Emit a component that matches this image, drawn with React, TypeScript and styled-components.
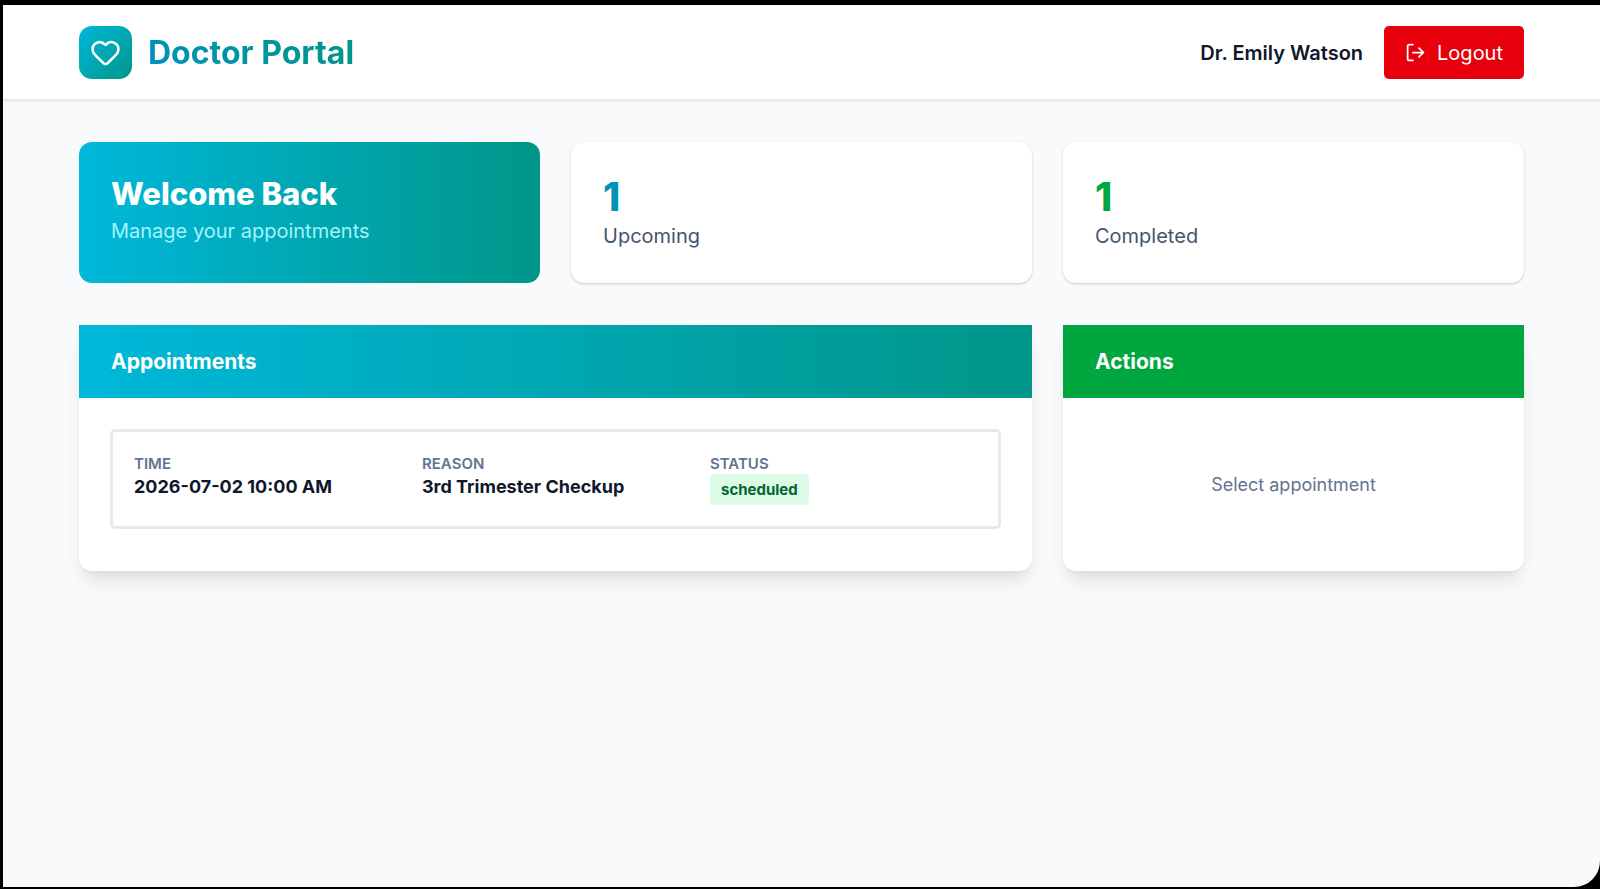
import React from "react";
import styled, { createGlobalStyle } from "styled-components";
import { Heart, LogOut } from "lucide-react";

const GlobalStyle = createGlobalStyle`
  *, *::before, *::after { box-sizing: border-box; }
  body {
    margin: 0;
    background: #000;
    color: #0f172b;
    font-family: Inter, "Liberation Sans", sans-serif;
    font-size: 20px;
    line-height: 32px;
  }
  h1, h2, p, ul, dl, dd { margin: 0; padding: 0; }
`;

const Frame = styled.div`
  display: flex;
  min-height: 100vh;
  padding: 5px 0 2px 3px;
`;

const Page = styled.div`
  flex: 1;
  overflow: hidden;
  border-bottom-right-radius: 26px;
  background: #f8fafc;
`;

const Header = styled.header`
  display: flex;
  align-items: center;
  justify-content: space-between;
  padding: 21px 76px 20px;
  background: #fff;
  border-bottom: 1px solid #e5e7eb;
  box-shadow: 0 1px 3px rgba(0, 0, 0, 0.1);
`;

const Brand = styled.div`
  display: flex;
  align-items: center;
  gap: 16px;
`;

const Logo = styled.span`
  display: grid;
  place-items: center;
  width: 53px;
  height: 53px;
  border-radius: 13px;
  color: #fff;
  background: linear-gradient(135deg in oklab, #00b8db, #009689);
`;

const BrandName = styled.h1`
  font-size: 32px;
  font-weight: 700;
  line-height: 42px;
  color: transparent;
  background: linear-gradient(90deg in oklab, #0092b8, #009689);
  background-clip: text;
`;

const Account = styled.div`
  display: flex;
  align-items: center;
  gap: 21px;
`;

const UserName = styled.span`
  font-weight: 600;
`;

const LogoutButton = styled.button`
  display: flex;
  align-items: center;
  gap: 11px;
  height: 53px;
  padding: 0 21px;
  border: 0;
  border-radius: 5px;
  background: #e7000b;
  color: #fff;
  font: inherit;
  cursor: pointer;
`;

const Main = styled.main`
  display: grid;
  gap: 42px;
  padding: 42px 76px;
`;

const Columns = styled.div`
  display: grid;
  grid-template-columns: repeat(3, minmax(0, 1fr));
  gap: 31px;
`;

const Card = styled.section`
  padding: 31px 32px;
  border-radius: 13px;
  background: #fff;
  box-shadow: 0 1px 3px rgba(0, 0, 0, 0.1), 0 1px 2px rgba(0, 0, 0, 0.1);
`;

const WelcomeCard = styled(Card)`
  background: linear-gradient(90deg in oklab, #00b8db, #009689);
  box-shadow: none;
`;

const WelcomeTitle = styled.h2`
  color: #fff;
  font-size: 31px;
  font-weight: 800;
  line-height: 42px;
`;

const WelcomeText = styled.p`
  color: #a2f4fd;
`;

const StatValue = styled.p<{ $color: string }>`
  color: ${(p) => p.$color};
  font-size: 39px;
  font-weight: 800;
  line-height: 47px;
`;

const StatLabel = styled.p`
  color: #45556c;
`;

const Panel = styled.section<{ $span?: number }>`
  display: flex;
  flex-direction: column;
  grid-column: span ${(p) => p.$span ?? 1};
  border-radius: 13px;
  background: #fff;
  box-shadow: 0 13px 20px -4px rgba(0, 0, 0, 0.1), 0 5px 8px -5px rgba(0, 0, 0, 0.1);
`;

const PanelTitle = styled.h2<{ $background: string }>`
  padding: 21px 32px;
  background: ${(p) => p.$background};
  color: #fff;
  font-size: 21px;
  font-weight: 700;
  line-height: 31px;
`;

const AppointmentList = styled.ul`
  padding: 31px;
  list-style: none;
`;

const Appointment = styled.li`
  margin-bottom: 11px;
  padding: 21px;
  border: 3px solid #e4eaf2;
  border-radius: 5px;
  cursor: pointer;
`;

const Details = styled.dl`
  display: grid;
  grid-template-columns: repeat(3, minmax(0, 1fr));
  gap: 21px;
`;

const DetailLabel = styled.dt`
  color: #62748e;
  font-size: 15px;
  font-weight: 600;
  line-height: 21px;
`;

const DetailValue = styled.dd`
  display: flex;
  font-size: 18px;
  font-weight: 700;
  line-height: 26px;
`;

const Badge = styled.span`
  padding: 5px 11px;
  border-radius: 4px;
  background: #dcfce7;
  color: #016630;
  font-size: 15px;
  font-weight: 700;
  line-height: 21px;
`;

const EmptyState = styled.p`
  display: grid;
  flex: 1;
  place-items: center;
  padding: 31px;
  color: #62748e;
  font-size: 18px;
`;

const appointments = [
  { time: "2026-07-02 10:00 AM", reason: "3rd Trimester Checkup", status: "scheduled" },
];

export default function App() {
  return (
    <>
      <GlobalStyle />
      <Frame>
        <Page>
          <Header>
            <Brand>
              <Logo>
                <Heart size={31} aria-hidden="true" />
              </Logo>
              <BrandName>Doctor Portal</BrandName>
            </Brand>
            <Account>
              <UserName>Dr. Emily Watson</UserName>
              <LogoutButton type="button">
                <LogOut size={21} aria-hidden="true" />
                Logout
              </LogoutButton>
            </Account>
          </Header>
          <Main>
            <Columns>
              <WelcomeCard>
                <WelcomeTitle>Welcome Back</WelcomeTitle>
                <WelcomeText>Manage your appointments</WelcomeText>
              </WelcomeCard>
              <Card>
                <StatValue $color="#0092b8">1</StatValue>
                <StatLabel>Upcoming</StatLabel>
              </Card>
              <Card>
                <StatValue $color="#00a63e">1</StatValue>
                <StatLabel>Completed</StatLabel>
              </Card>
            </Columns>
            <Columns>
              <Panel $span={2}>
                <PanelTitle $background="linear-gradient(90deg in oklab, #00b8db, #009689)">
                  Appointments
                </PanelTitle>
                <AppointmentList>
                  {appointments.map((a) => (
                    <Appointment key={a.time}>
                      <Details>
                        <div>
                          <DetailLabel>TIME</DetailLabel>
                          <DetailValue>{a.time}</DetailValue>
                        </div>
                        <div>
                          <DetailLabel>REASON</DetailLabel>
                          <DetailValue>{a.reason}</DetailValue>
                        </div>
                        <div>
                          <DetailLabel>STATUS</DetailLabel>
                          <DetailValue>
                            <Badge>{a.status}</Badge>
                          </DetailValue>
                        </div>
                      </Details>
                    </Appointment>
                  ))}
                </AppointmentList>
              </Panel>
              <Panel>
                <PanelTitle $background="#00a63e">Actions</PanelTitle>
                <EmptyState>Select appointment</EmptyState>
              </Panel>
            </Columns>
          </Main>
        </Page>
      </Frame>
    </>
  );
}
